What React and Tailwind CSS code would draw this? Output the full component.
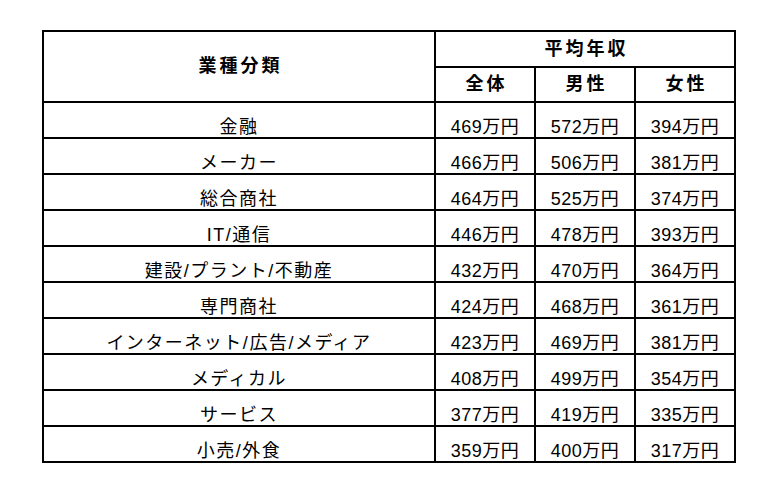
const rows = [
  ["金融", "469", "572", "394"],
  ["メーカー", "466", "506", "381"],
  ["総合商社", "464", "525", "374"],
  ["IT/通信", "446", "478", "393"],
  ["建設/プラント/不動産", "432", "470", "364"],
  ["専門商社", "424", "468", "361"],
  ["インターネット/広告/メディア", "423", "469", "381"],
  ["メディカル", "408", "499", "354"],
  ["サービス", "377", "419", "335"],
  ["小売/外食", "359", "400", "317"],
];

export default function App() {
  const cell = "border-2 border-black text-center align-bottom p-0 leading-[20px]";
  const head = "border-2 border-black text-center align-middle p-0 font-bold text-[18px] tracking-[3px] pl-[3px]";
  return (
    <div className="w-[778px] h-[486px] bg-white pt-[30px] pl-[42px]" style={{ fontFamily: '"Liberation Sans", "Noto Sans CJK JP", sans-serif' }}>
      <table className="border-collapse table-fixed w-[693px] text-black text-[18px]">
        <colgroup>
          <col className="w-[392px]" />
          <col className="w-[100px]" />
          <col className="w-[100px]" />
          <col className="w-[100px]" />
        </colgroup>
        <thead>
          <tr className="h-[36px]">
            <th rowSpan={2} className={head}>業種分類</th>
            <th colSpan={3} className={head}>平均年収</th>
          </tr>
          <tr className="h-[35px]">
            <th className={head}>全体</th>
            <th className={head}>男性</th>
            <th className={head}>女性</th>
          </tr>
        </thead>
        <tbody>
          {rows.map((r) => (
            <tr key={r[0]} className="h-[36px]">
              <td className={cell + " tracking-[1.5px]"}>{r[0]}</td>
              <td className={cell + " tracking-[0.5px]"}>{r[1]}万円</td>
              <td className={cell + " tracking-[0.5px]"}>{r[2]}万円</td>
              <td className={cell + " tracking-[0.5px]"}>{r[3]}万円</td>
            </tr>
          ))}
        </tbody>
      </table>
    </div>
  );
}
